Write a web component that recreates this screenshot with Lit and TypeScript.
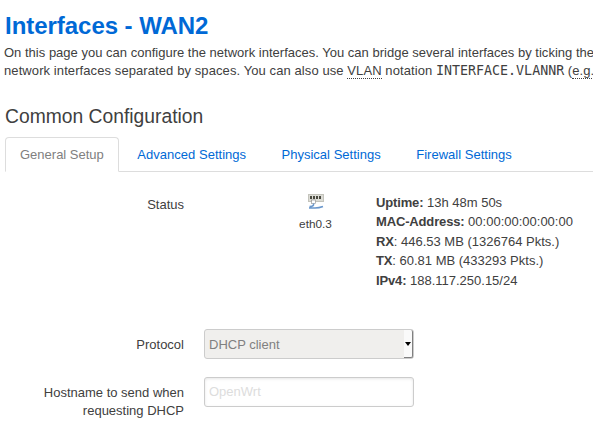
import { LitElement, html, css } from "lit";
import { customElement } from "lit/decorators.js";

@customElement("app-root")
export class AppRoot extends LitElement {
  static styles = css`
    :host { display: block; width: 593px; height: 434px; overflow: hidden; background: #fff; font-family: "Liberation Sans", Arial, sans-serif; font-size: 13px; line-height: 18px; color: #404040; }
    .page { padding: 0 0 0 5px; width: 900px; }
    h2 { margin: 0; padding-top: 8px; font-size: 24px; line-height: 36px; font-weight: bold; color: #0069d6; letter-spacing: -0.04px; }
    .desc { margin: 0 0 0 -1px; white-space: nowrap; }
    .desc div { height: 18px; }
    .l1 { letter-spacing: 0.01px; }
    .l2 { letter-spacing: 0.09px; }
    abbr { border-bottom: 1px dotted #404040; text-decoration: none; }
    code { font-family: "DejaVu Sans Mono", monospace; font-size: 13.3px; color: #404040; letter-spacing: 0; }
    h3 { margin: 0; padding-top: 23px; font-size: 19.3px; line-height: 27px; font-weight: normal; color: #404040; }
    .tabs { display: flex; box-sizing: border-box; margin: 7px 0 0 0; border-bottom: 1px solid #ddd; height: 35px; width: 588px; letter-spacing: 0.02px; }
    .tab { padding: 0 14.7px; margin-right: 4px; height: 35px; box-sizing: border-box; line-height: 33px; color: #0069d6; border: 1px solid transparent; }
    .tab.active { padding: 0 14px; margin-right: 2.8px; letter-spacing: 0; color: #808080; background: #fff; border: 1px solid #ddd; border-bottom-color: #fff; border-radius: 4px 4px 0 0; }
    .row { display: grid; grid-template-columns: 179px 1fr; column-gap: 20px; }
    .label { text-align: right; color: #404040; }
    .status { margin-top: 23px; height: 134px; }
    .statusbody { display: flex; margin-top: -1px; }
    .status .label { padding-top: 1px; }
    .dev { width: 172px; box-sizing: border-box; padding-left: 51px; display: flex; flex-direction: column; align-items: center; color: #404040; font-size: 11.8px; }
    .dev svg { display: block; margin-left: 1px; }
    .dev span { margin-top: 5px; }
    .info { line-height: 19.4px; white-space: nowrap; margin-top: -1px; }
    .info b { font-weight: bold; letter-spacing: -0.15px; }
    .proto { height: 30px; }
    .proto .label { padding-top: 7px; }
    .select { width: 210px; height: 30px; box-sizing: border-box; border: 1px solid #ccc; border-radius: 3px; background: #f0efed; color: #808080; display: flex; align-items: center; padding: 1px 0 0 4px; position: relative; }
    .arrowbtn { position: absolute; right: 0; top: 0; bottom: 0; width: 9px; background: #fafafa; border-right: 1px solid #808080; border-bottom: 1px solid #808080; border-radius: 0 2px 2px 0; display: flex; align-items: center; justify-content: center; box-sizing: border-box; }
    .arrowbtn i { width: 0; height: 0; border-left: 3px solid transparent; border-right: 3px solid transparent; border-top: 4px solid #000; }
    .host { margin-top: 18px; }
    .host .label { padding-top: 7px; }
    .input { width: 210px; height: 30px; box-sizing: border-box; border: 1px solid #ccc; border-radius: 3px; box-shadow: inset 0 1px 3px rgba(0,0,0,.1); color: #ddd; display: flex; align-items: center; padding-left: 4px; }
  `;

  render() {
    return html`<div class="page">
      <h2>Interfaces - WAN2</h2>
      <div class="desc">
        <div class="l1">On this page you can configure the network interfaces. You can bridge several interfaces by ticking the "bridge interfaces" field and enter the names of several</div>
        <div class="l2">network interfaces separated by spaces. You can also use <abbr>VLAN</abbr> notation <code>INTERFACE.VLANNR</code> (<abbr>e.g.</abbr>, <code>eth0.1</code>).</div>
      </div>
      <h3>Common Configuration</h3>
      <div class="tabs">
        <div class="tab active">General Setup</div>
        <div class="tab">Advanced Settings</div>
        <div class="tab">Physical Settings</div>
        <div class="tab">Firewall Settings</div>
      </div>
      <div class="row status">
        <div class="label">Status</div>
        <div class="statusbody">
          <div class="dev">
            <svg width="16" height="16" viewBox="0 0 16 16">
              <rect x="0.5" y="0.5" width="15" height="7" fill="#dcdcd6" stroke="#c4c4bc" stroke-width="1"/>
              <rect x="2" y="2" width="2" height="3" fill="#4a4a40"/>
              <rect x="5" y="2" width="2" height="3" fill="#4a4a40"/>
              <rect x="8" y="2" width="2" height="3" fill="#4a4a40"/>
              <rect x="11" y="2" width="2" height="3" fill="#4a4a40"/>
              <rect x="3.5" y="6" width="4" height="3.5" fill="#fff" stroke="#888" stroke-width="0.6"/>
              <path d="M5.5 9.5 V11 Q5 12.5 1.5 12.5 M1 14 H7 Q11 14 15 12.5" fill="none" stroke="#6a97cc" stroke-width="1.5"/>
            </svg>
            <span>eth0.3</span>
          </div>
          <div class="info">
            <div><b>Uptime:</b> 13h 48m 50s</div>
            <div><b>MAC-Address:</b> 00:00:00:00:00:00</div>
            <div><b>RX</b>: 446.53 MB (1326764 Pkts.)</div>
            <div><b>TX</b>: 60.81 MB (433293 Pkts.)</div>
            <div><b>IPv4:</b> 188.117.250.15/24</div>
          </div>
        </div>
      </div>
      <div class="row proto">
        <div class="label">Protocol</div>
        <div class="select">DHCP client<div class="arrowbtn"><i></i></div></div>
      </div>
      <div class="row host">
        <div class="label">Hostname to send when requesting DHCP</div>
        <div class="input">OpenWrt</div>
      </div>
    </div>`;
  }
}
